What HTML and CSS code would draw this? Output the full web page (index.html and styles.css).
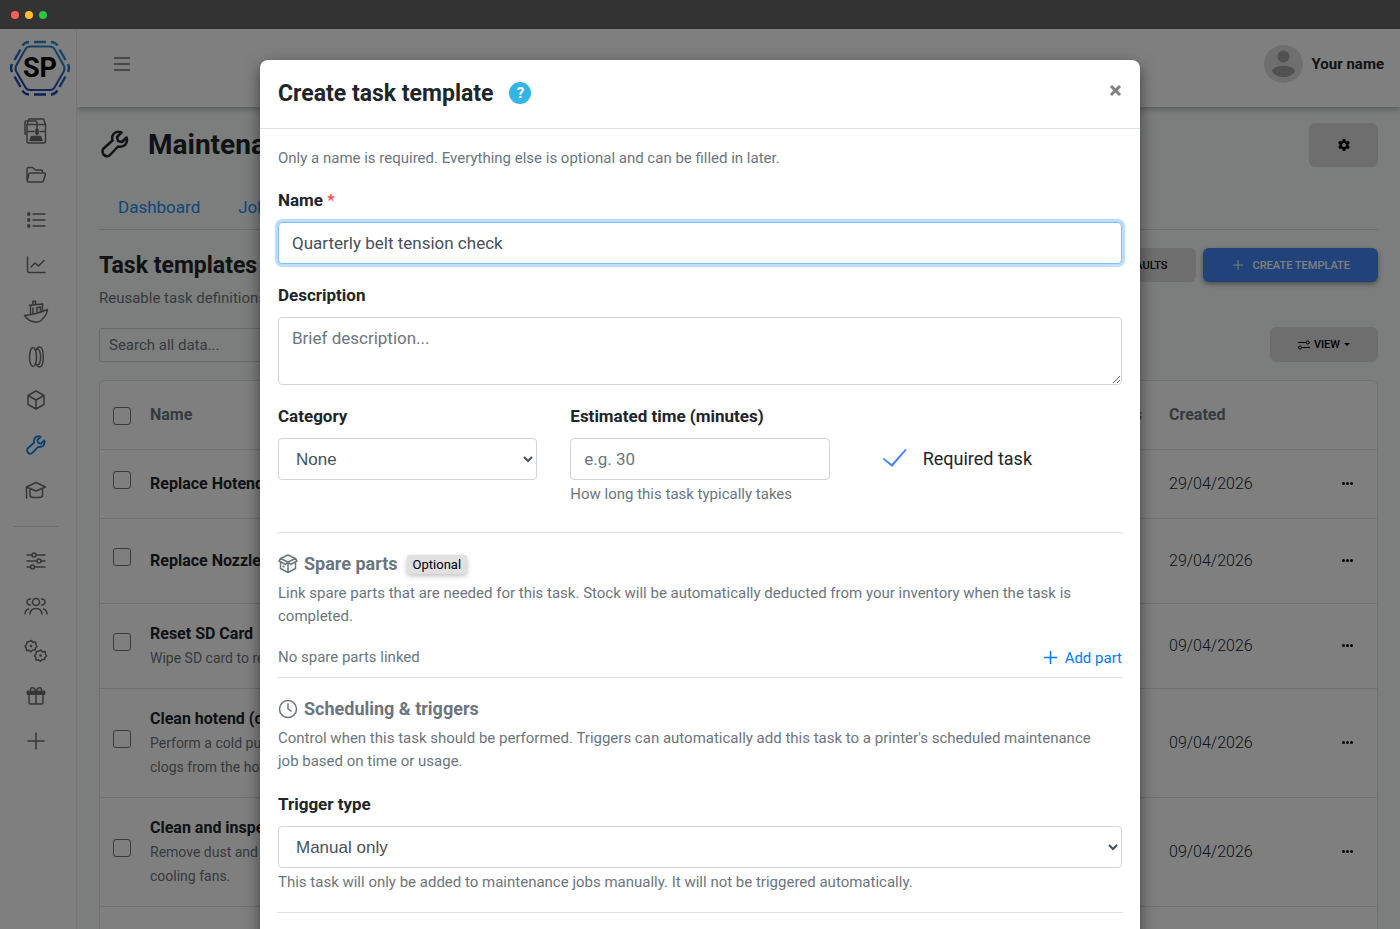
FILE: index.html
```html
<!DOCTYPE html>
<html lang="en">
<head>
    <meta charset="UTF-8">
    <meta name="viewport" content="width=device-width, initial-scale=1.0">
    <title>Maintenance - Task templates</title>
    <link rel="stylesheet" href="styles.css">
</head>
<body>
    <!-- Window bar -->
    <div class="window-bar">
        <span class="dot red"></span>
        <span class="dot yellow"></span>
        <span class="dot green"></span>
    </div>

    <div class="app">
        <!-- Sidebar -->
        <aside class="sidebar">
            <a href="#" class="logo" aria-label="Home">
                <svg width="60" height="58" viewBox="0 0 60 58" fill="none">
                    <defs>
                        <linearGradient id="logoGradient" gradientUnits="userSpaceOnUse" x1="15" y1="56" x2="40" y2="2">
                            <stop offset="0" stop-color="#2038a8"/>
                            <stop offset="1" stop-color="#3090d0"/>
                        </linearGradient>
                    </defs>
                    <path d="M20 6.500H40Q43 6.500 44.500 9L54 26Q55 28.500 54 31L44.500 47.500Q43 50 40 50H20Q17 50 15.500 47.500L6 31Q5 28.500 6 26L15.500 9Q17 6.500 20 6.500Z" stroke="url(#logoGradient)" stroke-width="2"/>
                    <path d="M24 2H36M41 2Q45.500 2.200 47.500 5.500M49.500 9.500L55.500 20M58 24Q60 28 58 32M55.500 36.500L49.500 47M47.500 50.500Q45 54.300 41 54.500M36 54.500H24M19 54.500Q14.500 54.300 12.500 50.500M10.500 47L4.500 36.500M2 32Q0 28 2 24M4.500 20L10.500 9.500M12.500 5.500Q14.500 2.200 19 2" stroke="url(#logoGradient)" stroke-width="2.400"/>
                    <text x="30" y="37" text-anchor="middle" class="logo-text">SP</text>
                </svg>
            </a>
            <nav class="side-nav">
                <a href="#" aria-label="Printers">
                    <svg width="24" height="28" viewBox="0 -2 24 28"><path d="M3 6.500L5 1H19.500L21.500 6.500V23.500Q21.500 25 20 25H4.500Q3 25 3 23.500ZM3 6.500H21.500M3 16H1V4Q1 3 2 3H11.500Q13 3 13 4.500V11M3 13.500H10M16 13.500H21.500"/><path class="solid" d="M12 11.500H14V15.500L13 16.500L12 15.500ZM7.500 18.500H16.500L18 22.500H6Z"/></svg>
                </a>
                <a href="#" aria-label="Files">
                    <svg width="22" height="18" viewBox="0 0 22 18"><path d="M2 14V3Q2 1.500 3.500 1.500H7.500L10.500 4H16Q17.500 4 17.500 5.500M5.500 7H19Q20.800 7 20.300 8.800L18.500 14.800Q18.200 16 17 16H3.500Q2 16 2.300 14.500L3.800 8.300Q4.200 7 5.500 7Z"/></svg>
                </a>
                <a href="#" aria-label="Queue">
                    <svg width="20" height="18" viewBox="0 0 20 18"><path d="M7 3H19M7 9H19M7 15H19"/><path class="solid" d="M2 2H3.500V4H2ZM2 8H3.500V10H2ZM2 14H3.500V16H2Z"/></svg>
                </a>
                <a href="#" aria-label="Statistics">
                    <svg width="20" height="18" viewBox="0 0 20 18"><path d="M1.500 1V14.500Q1.500 16.500 3.500 16.500H19M5 11L9 7L12.500 10L18 4.500"/></svg>
                </a>
                <a href="#" aria-label="Models">
                    <svg width="26" height="24" viewBox="0 -2 26 24"><path d="M1.500 15.500Q13 14.500 24.500 9.500Q24 15 18 20.500Q16 22.500 12 22Q5 21 1.500 15.500ZM7.500 14.500V5L19.500 4V11.500M6.500 5.300L20 4M10 4.500L9.800 1.200H12.500V4.500M10 8V14M14 7.500V13L17.500 12V7Z"/></svg>
                </a>
                <a href="#" aria-label="Filament">
                    <svg width="18" height="24" viewBox="0 -2 18 24"><ellipse cx="6" cy="12" rx="3.500" ry="9.500"/><path d="M9 5Q10.500 2 12.500 2C17.500 2 17.500 22 12.500 22Q10.500 22 9 19M10 4Q13.500 4 13.500 12T10 20"/></svg>
                </a>
                <a href="#" aria-label="Spare parts">
                    <svg width="20" height="20" viewBox="0 0 20 20"><path d="M10 1L18 5.500V14.500L10 19L2 14.500V5.500ZM2 5.500L10 10L18 5.500M10 10V19"/></svg>
                </a>
                <a href="#" class="active" aria-label="Maintenance">
                    <svg width="20" height="20" viewBox="0 0 28 28"><use href="#wrench"/></svg>
                </a>
                <a href="#" aria-label="Academy">
                    <svg width="22" height="18" viewBox="0 0 22 18"><path d="M1.500 17V6L11 1.500L20.500 6L11 10L1.500 6M5 8V14Q5 16.500 8 16.500H14Q17.500 16.500 17.500 14V8"/></svg>
                </a>
                <hr>
                <a href="#" aria-label="Settings">
                    <svg width="20" height="20" viewBox="0 0 20 20"><path d="M1 4H6M10 4H19M1 10H11M15 10H19M1 16H4.500M8.500 16H19"/><circle cx="8" cy="4" r="2"/><circle cx="13" cy="10" r="2"/><circle cx="6.500" cy="16" r="2"/></svg>
                </a>
                <a href="#" aria-label="Users">
                    <svg width="24" height="20" viewBox="0 0 24 20"><circle cx="12" cy="6" r="3.500"/><path d="M6 18Q6.500 12.500 12 12.500T18 18M6.500 3Q3 3 3 6T6.500 9M17.500 3Q21 3 21 6T17.500 9M1 18Q1.200 14 4.500 13M23 18Q22.800 14 19.500 13"/></svg>
                </a>
                <a href="#" aria-label="Integrations">
                    <svg width="24" height="24" viewBox="0 0 24 24"><path id="cog" d="M5.500 2.500L7.500 1.500L9 3.500L11.500 3L12 5.500L13 7.500L11.500 8.800L11 11L8.500 11L7 12.800L5 11.300L2.500 11.500L2.300 9L1 7.200L2.500 5.500L3 3Z"/><use href="#cog" x="9.500" y="9.500"/><path class="solid" d="M6.500 6.500H7.500V7.500H6.500ZM16 16H17V17H16Z"/></svg>
                </a>
                <a href="#" aria-label="Rewards">
                    <svg width="20" height="20" viewBox="0 0 20 20"><path d="M3 8V16.500Q3 18 4.500 18H15.500Q17 18 17 16.500V8M10 6V18M1.500 5.500H18.500V8H1.500ZM10 5.500C8 0 4 1 4.500 4.500M10 5.500C12 0 16 1 15.500 4.500"/><path class="solid" d="M1.500 5.500H18.500V8H1.500Z"/></svg>
                </a>
                <a href="#" aria-label="Add">
                    <svg width="18" height="18" viewBox="0 0 18 18"><path d="M9 1V17M1 9H17"/></svg>
                </a>
            </nav>
        </aside>

        <div class="main">
            <!-- Top bar -->
            <header class="topbar">
                <button type="button" class="menu-toggle" aria-label="Toggle menu">
                    <svg width="18" height="16" viewBox="0 0 18 16"><path d="M1 2H17M1 8H17M1 14H17"/></svg>
                </button>
                <a href="#" class="user">
                    <svg width="39" height="38" viewBox="0 0 39 38"><ellipse cx="19.500" cy="19" rx="19.500" ry="19" fill="#dedede"/><circle cx="19.500" cy="11.500" r="6" fill="#a2a2a2"/><path d="M8 26C10 19 29 19 31 26C27 34 12 34 8 26Z" fill="#a2a2a2"/></svg>
                    <span>Your name</span>
                </a>
            </header>

            <main class="content">
                <div class="page-head">
                    <svg class="page-icon" width="28" height="28" viewBox="0 0 28 28"><path id="wrench" d="M25.500 7.500L21 12L17 11L16 7L20.500 2.500Q15.500 .5 12.500 4Q10.500 6.800 11.500 10.500L2.500 18.500Q.5 21 2.500 24.500Q5.500 27.500 8.500 25.500L17 16.500Q20.500 17.500 24 15Q27 12 25.500 7.500Z"/></svg>
                    <h1>Maintenance</h1>
                    <button type="button" class="btn btn-gear" aria-label="Settings">
                        <svg width="12" height="12" viewBox="0 0 24 24"><path fill-rule="evenodd" d="M9.500 0H14.500L15.300 3.500L17.700 4.900L21.200 3.800L23.700 8.200L21 10.600V13.400L23.700 15.800L21.200 20.200L17.700 19.100L15.300 20.500L14.500 24H9.500L8.700 20.500L6.300 19.100L2.800 20.200L.3 15.800L3 13.400V10.600L.3 8.200L2.800 3.800L6.300 4.900L8.700 3.500ZM12 8A4 4 0 1 0 12 16A4 4 0 1 0 12 8Z"/></svg>
                    </button>
                </div>

                <nav class="tabs">
                    <a href="#">Dashboard</a>
                    <a href="#">Jobs</a>
                </nav>

                <div class="section-head">
                    <h2>Task templates</h2>
                    <div class="actions">
                        <button type="button" class="btn">Restore defaults</button>
                        <button type="button" class="btn btn-primary">
                            <svg width="10" height="10" viewBox="0 0 10 10"><path d="M5 0V10M0 5H10"/></svg>
                            Create template
                        </button>
                    </div>
                </div>
                <p class="section-text">Reusable task definitions</p>

                <div class="table-tools">
                    <input type="search" class="search" placeholder="Search all data..." aria-label="Search all data">
                    <button type="button" class="btn btn-view">
                        <svg width="12" height="10" viewBox="0 0 12 10"><path d="M0 2.500H8M4 7.500H12"/><circle cx="9.800" cy="2.500" r="1.500"/><circle cx="2" cy="7.500" r="1.500"/></svg>
                        View
                        <span class="caret"></span>
                    </button>
                </div>

                <div class="table-card">
                    <table>
                        <thead>
                            <tr>
                                <th class="col-check"><input type="checkbox" aria-label="Select all"></th>
                                <th class="col-name">Name</th>
                                <th class="col-parts">Spare parts</th>
                                <th class="col-created">Created</th>
                                <th class="col-more"></th>
                            </tr>
                        </thead>
                        <tbody>
                            <tr>
                                <td><input type="checkbox" aria-label="Select Replace Hotend"></td>
                                <td><strong>Replace Hotend</strong></td>
                                <td></td>
                                <td class="date">29/04/2026</td>
                                <td><button type="button" class="more" aria-label="More"><i></i><i></i><i></i></button></td>
                            </tr>
                            <tr class="row-medium">
                                <td><input type="checkbox" aria-label="Select Replace Nozzle"></td>
                                <td><strong>Replace Nozzle</strong></td>
                                <td></td>
                                <td class="date">29/04/2026</td>
                                <td><button type="button" class="more" aria-label="More"><i></i><i></i><i></i></button></td>
                            </tr>
                            <tr class="row-medium">
                                <td><input type="checkbox" aria-label="Select Reset SD Card"></td>
                                <td><strong>Reset SD Card</strong><p>Wipe SD card to reset</p></td>
                                <td></td>
                                <td class="date">09/04/2026</td>
                                <td><button type="button" class="more" aria-label="More"><i></i><i></i><i></i></button></td>
                            </tr>
                            <tr>
                                <td><input type="checkbox" aria-label="Select Clean hotend"></td>
                                <td><strong>Clean hotend (cold pull)</strong><p>Perform a cold pull<br>clogs from the hotend.</p></td>
                                <td></td>
                                <td class="date">09/04/2026</td>
                                <td><button type="button" class="more" aria-label="More"><i></i><i></i><i></i></button></td>
                            </tr>
                            <tr>
                                <td><input type="checkbox" aria-label="Select Clean and inspect fans"></td>
                                <td><strong>Clean and inspect</strong><p>Remove dust and<br>cooling fans.</p></td>
                                <td></td>
                                <td class="date">09/04/2026</td>
                                <td><button type="button" class="more" aria-label="More"><i></i><i></i><i></i></button></td>
                            </tr>
                            <tr>
                                <td></td>
                                <td></td>
                                <td></td>
                                <td></td>
                                <td></td>
                            </tr>
                        </tbody>
                    </table>
                </div>
            </main>
        </div>

        <!-- Modal -->
        <div class="backdrop">
            <div class="modal" role="dialog" aria-labelledby="modalTitle">
                <div class="modal-header">
                    <h2 id="modalTitle">Create task template</h2>
                    <a href="#" class="help-badge" aria-label="Help">?</a>
                    <button type="button" class="close" aria-label="Close">
                        <svg width="13" height="13" viewBox="0 0 13 13"><path d="M2 2L11 11M11 2L2 11"/></svg>
                    </button>
                </div>
                <form class="modal-body">
                    <p class="muted intro">Only a name is required. Everything else is optional and can be filled in later.</p>

                    <div class="field">
                        <label for="taskName">Name <span class="required">*</span></label>
                        <input type="text" id="taskName" class="control focused" value="Quarterly belt tension check">
                    </div>

                    <div class="field">
                        <label for="taskDescription">Description</label>
                        <textarea id="taskDescription" class="control" placeholder="Brief description..."></textarea>
                    </div>

                    <div class="field-row">
                        <div class="field">
                            <label for="taskCategory">Category</label>
                            <select id="taskCategory" class="control">
                                <option>None</option>
                            </select>
                        </div>
                        <div class="field">
                            <label for="taskTime">Estimated time (minutes)</label>
                            <input type="text" id="taskTime" class="control" placeholder="e.g. 30">
                            <p class="muted">How long this task typically takes</p>
                        </div>
                        <label class="tick">
                            <input type="checkbox" checked>
                            Required task
                        </label>
                    </div>

                    <!-- Spare parts -->
                    <section class="group">
                        <h3>
                            <svg width="20" height="20" viewBox="0 0 20 20"><path d="M2.500 4.500L10 1L17.500 4.500L19 7L12.500 10.500L10 8L7.500 10.500L1 7ZM2.500 4.500L10 8L17.500 4.500M2.500 8.500V14.500L10 18.500L17.500 14.500V8.500M10 8V18.500M4.500 12L6.500 13"/></svg>
                            Spare parts
                            <span class="badge">Optional</span>
                        </h3>
                        <p class="muted">Link spare parts that are needed for this task. Stock will be automatically deducted from your inventory when the task is completed.</p>
                        <div class="parts-row">
                            <span class="muted">No spare parts linked</span>
                            <button type="button" class="link-btn">
                                <svg width="13" height="13" viewBox="0 0 13 13"><path d="M6.500 0V13M0 6.500H13"/></svg>
                                Add part
                            </button>
                        </div>
                    </section>

                    <!-- Scheduling -->
                    <section class="group">
                        <h3>
                            <svg width="20" height="20" viewBox="0 0 20 20"><circle cx="10" cy="10" r="8.500"/><path d="M10 4.500V10L13.500 12.500"/></svg>
                            Scheduling &amp; triggers
                        </h3>
                        <p class="muted">Control when this task should be performed. Triggers can automatically add this task to a printer's scheduled maintenance job based on time or usage.</p>
                        <div class="field trigger">
                            <label for="triggerType">Trigger type</label>
                            <select id="triggerType" class="control">
                                <option>Manual only</option>
                            </select>
                            <p class="muted">This task will only be added to maintenance jobs manually. It will not be triggered automatically.</p>
                        </div>
                    </section>

                    <section class="group"></section>
                </form>
            </div>
        </div>
    </div>
</body>
</html>
```
FILE: styles.css
```css
/* General Styles */
* {
    box-sizing: border-box;
}
body {
    margin: 0;
    height: 100vh;
    display: flex;
    flex-direction: column;
    overflow: hidden;
    font-family: Roboto, "Liberation Sans", sans-serif;
    font-size: 15px;
    color: #212529;
    background: #f8fcfa;
}
h1, h2, h3, p {
    margin: 0;
}
a {
    text-decoration: none;
}
button, input, textarea, select {
    font-family: inherit;
}
svg {
    fill: none;
    stroke: currentColor;
    flex-shrink: 0;
}

/* Window bar */
.window-bar {
    display: flex;
    align-items: center;
    gap: 6px;
    height: 29px;
    padding-left: 11px;
    background: #333;
    flex-shrink: 0;
}
.dot {
    width: 8px;
    height: 8px;
    border-radius: 50%;
}
.red {
    background: #ff5f57;
}
.yellow {
    background: #febc2e;
}
.green {
    background: #28c840;
}

.app {
    position: relative;
    display: flex;
    flex: 1;
    min-height: 0;
    overflow: hidden;
}

/* Sidebar */
.sidebar {
    position: relative;
    z-index: 1;
    width: 77px;
    flex-shrink: 0;
    background: #fff;
    border-right: 1px solid #eaeaea;
}
.logo {
    display: flex;
    justify-content: center;
    height: 78px;
    padding: 11px 0 0 3px;
}
.logo svg {
    overflow: visible;
}
.logo-text {
    font-size: 27px;
    font-weight: 700;
    fill: #000;
    stroke: none;
}
.side-nav {
    display: flex;
    flex-direction: column;
    padding-right: 5px;
}
.side-nav a {
    display: flex;
    align-items: center;
    justify-content: center;
    height: 45px;
    color: #6c6c6c;
}
.side-nav svg {
    overflow: visible;
    stroke-width: 1.5;
    stroke-linecap: round;
    stroke-linejoin: round;
}
.side-nav .solid {
    fill: currentColor;
}
.side-nav .active {
    color: #0c83e0;
}
.side-nav .active svg {
    stroke-width: 2.5;
}
.side-nav hr {
    width: 44px;
    margin: 14px auto 11px;
    border: 0;
    border-top: 1px solid #dcdcdc;
}

/* Top bar */
.main {
    flex: 1;
    display: flex;
    flex-direction: column;
    min-width: 0;
}
.topbar {
    display: flex;
    align-items: center;
    justify-content: space-between;
    height: 78px;
    padding: 0 16px 8px 36px;
    background: #fff;
    box-shadow: 0 2px 6px rgba(0, 0, 0, 0.3);
    flex-shrink: 0;
}
.menu-toggle {
    display: flex;
    padding: 0;
    border: 0;
    background: none;
    color: #6c6c6c;
}
.menu-toggle svg {
    stroke-width: 1.5;
}
.user {
    display: flex;
    align-items: center;
    gap: 9px;
    font-size: 15px;
    font-weight: 700;
    color: #212529;
}
.user svg {
    stroke: none;
}

/* Page */
.content {
    padding: 16px 22px 0;
}
.page-head {
    display: flex;
    align-items: center;
    height: 44px;
}
.page-icon {
    margin: 0 19px 2px 2px;
    stroke-width: 2.5;
    stroke-linejoin: round;
}
.page-head h1 {
    flex: 1;
    padding-bottom: 2px;
    font-size: 28px;
}
.btn {
    display: flex;
    align-items: center;
    justify-content: center;
    height: 34px;
    padding: 0 28px;
    border: 0;
    border-radius: 6px;
    background: #dcdcdc;
    color: #000;
    font-size: 11px;
    font-weight: 500;
    text-transform: uppercase;
}
.btn-gear {
    width: 69px;
    height: 44px;
}
.btn-gear svg {
    fill: currentColor;
    stroke: none;
}
.btn-primary {
    gap: 10px;
    padding: 0 28px 0 30px;
    background: #4285f4;
    color: #fff;
    box-shadow: 0 2px 5px rgba(0, 0, 0, 0.4);
}
.btn-view {
    gap: 4px;
    height: 35px;
}
.caret {
    border: 3px solid transparent;
    border-top-color: currentColor;
    border-bottom: 0;
}
.tabs {
    display: flex;
    height: 63px;
    padding-top: 17px;
    border-bottom: 1px solid #dadedc;
}
.tabs a {
    padding: 0 19px;
    font-size: 17px;
    line-height: 46px;
    color: #1d8ef0;
}
.section-head {
    display: flex;
    align-items: center;
    justify-content: space-between;
    margin-top: 18px;
}
.section-head h2 {
    padding-top: 2px;
    font-size: 23px;
    line-height: 32px;
}
.actions {
    display: flex;
    gap: 7px;
}
.section-text {
    margin-top: 4px;
    line-height: 24px;
    color: #6c757d;
}
.table-tools {
    display: flex;
    justify-content: space-between;
    align-items: flex-end;
    margin: 17px 0 18px;
}
.search {
    width: 240px;
    height: 34px;
    padding: 0 9px;
    border: 1px solid #ced4da;
    border-radius: 3px;
    background: transparent;
    font-size: 15px;
}
.search::placeholder {
    color: #6c757d;
}

/* Table */
.table-card {
    border: 1px solid #dee2e6;
    border-radius: 6px;
    background: #fff;
}
table {
    width: 100%;
    border-collapse: collapse;
    table-layout: fixed;
}
th, td {
    height: 69px;
    padding: 18px 0;
    border-bottom: 1px solid #dee2e6;
    text-align: left;
    line-height: 24px;
}
th {
    height: 68px;
    padding: 0;
    font-size: 16px;
    color: #6c757d;
}
th input {
    vertical-align: middle;
}
.row-medium td {
    height: 85px;
}
th:first-child, td:first-child {
    padding-left: 13px;
}
.col-check {
    width: 50px;
}
.col-parts {
    width: 114px;
}
.col-created {
    width: 173px;
}
.col-more {
    width: 35px;
}
.col-parts {
    text-align: right;
}
th.col-parts {
    padding-right: 27px;
}
table input {
    display: inline-block;
    appearance: none;
    width: 18px;
    height: 18px;
    margin: 0;
    border: 1px solid #767676;
    border-radius: 3px;
    background: #fff;
}
td strong {
    font-size: 16px;
}
td p {
    font-size: 14px;
    color: #6c757d;
}
.date {
    font-size: 16px;
    font-weight: 300;
}
.more {
    display: flex;
    gap: 1px;
    padding: 0;
    border: 0;
    background: none;
}
.more i {
    width: 3px;
    height: 3px;
    border-radius: 50%;
    background: #000;
}

/* Modal */
.backdrop {
    position: absolute;
    z-index: 2;
    inset: 0;
    display: flex;
    justify-content: center;
    align-items: flex-start;
    padding-top: 31px;
    background: rgba(0, 0, 0, 0.5);
    overflow: hidden;
}
.modal {
    width: 880px;
    max-width: 100%;
    padding-bottom: 40px;
    border-radius: 8px;
    background: #fff;
    box-shadow: 0 5px 15px rgba(0, 0, 0, 0.5);
}
.modal-header {
    display: flex;
    align-items: center;
    height: 69px;
    padding: 0 18px 2px;
    border-bottom: 1px solid #dee2e6;
}
.modal-header h2 {
    font-size: 23px;
}
.help-badge {
    width: 22px;
    height: 22px;
    margin-left: 16px;
    border-radius: 50%;
    background: #33b5e5;
    color: #fff;
    font-weight: 700;
    line-height: 22px;
    text-align: center;
}
.close {
    display: flex;
    margin: 0 0 6px auto;
    padding: 0;
    border: 0;
    background: none;
    color: #7f7f7f;
}
.close svg {
    stroke-width: 3;
}
.modal-body {
    padding: 18px 18px 0;
}
.muted {
    font-size: 15px;
    line-height: 23px;
    color: #6c757d;
}
.intro {
    margin-bottom: 17px;
}
.field {
    margin-bottom: 18px;
}
.field label {
    display: block;
    margin-bottom: 9px;
    font-size: 17px;
    font-weight: 700;
    line-height: 26px;
}
.required {
    color: #ff3547;
    font-weight: 400;
}
.control {
    display: block;
    width: 100%;
    height: 42px;
    padding: 0 13px;
    border: 1px solid #ced4da;
    border-radius: 4px;
    background: #fff;
    color: #495057;
    font-size: 17px;
}
.control::placeholder {
    color: #6c757d;
}
.focused {
    border-color: #80bdff;
    box-shadow: 0 0 0 3px rgba(0, 123, 255, 0.25);
    outline: 0;
}
textarea.control {
    height: 68px;
    padding: 7px 13px;
    line-height: 26px;
}
select.control {
    font-family: "Liberation Sans", sans-serif;
}
.field .muted {
    margin-top: 3px;
}
.field-row {
    display: grid;
    grid-template-columns: repeat(3, 1fr);
    gap: 33px;
    margin-bottom: 8px;
}
.tick {
    display: flex;
    align-items: center;
    gap: 16px;
    height: 42px;
    margin-top: 34px;
    padding-left: 20px;
    font-size: 18px;
}
.tick input {
    appearance: none;
    width: 24px;
    height: 18px;
    margin: 0;
    background: #4285f4;
    clip-path: polygon(0 56%, 5% 50%, 38% 84%, 94% 0, 100% 5%, 39% 100%);
}
.group {
    border-top: 1px solid #dee2e6;
    padding-top: 18px;
}
.group > .muted {
    padding-right: 10px;
}
.group h3 {
    display: flex;
    align-items: center;
    gap: 6px;
    margin-bottom: 5px;
    font-size: 18px;
    line-height: 26px;
    color: #6c757d;
}
.group h3 svg {
    stroke-width: 1.5;
    stroke-linejoin: round;
}
.badge {
    margin-left: 3px;
    padding: 0 6px;
    border-radius: 3px;
    background: #e0e0e0;
    box-shadow: 0 2px 5px rgba(0, 0, 0, 0.25);
    color: #000;
    font-size: 13px;
    font-weight: 400;
    line-height: 19px;
}
.parts-row {
    display: flex;
    justify-content: space-between;
    align-items: center;
    padding: 18px 0 8px;
}
.link-btn {
    display: flex;
    align-items: center;
    gap: 8px;
    padding: 0;
    border: 0;
    background: none;
    color: #007bff;
    font-size: 15px;
}
.link-btn svg {
    stroke-width: 1.5;
}
.trigger {
    margin-top: 18px;
}
```
